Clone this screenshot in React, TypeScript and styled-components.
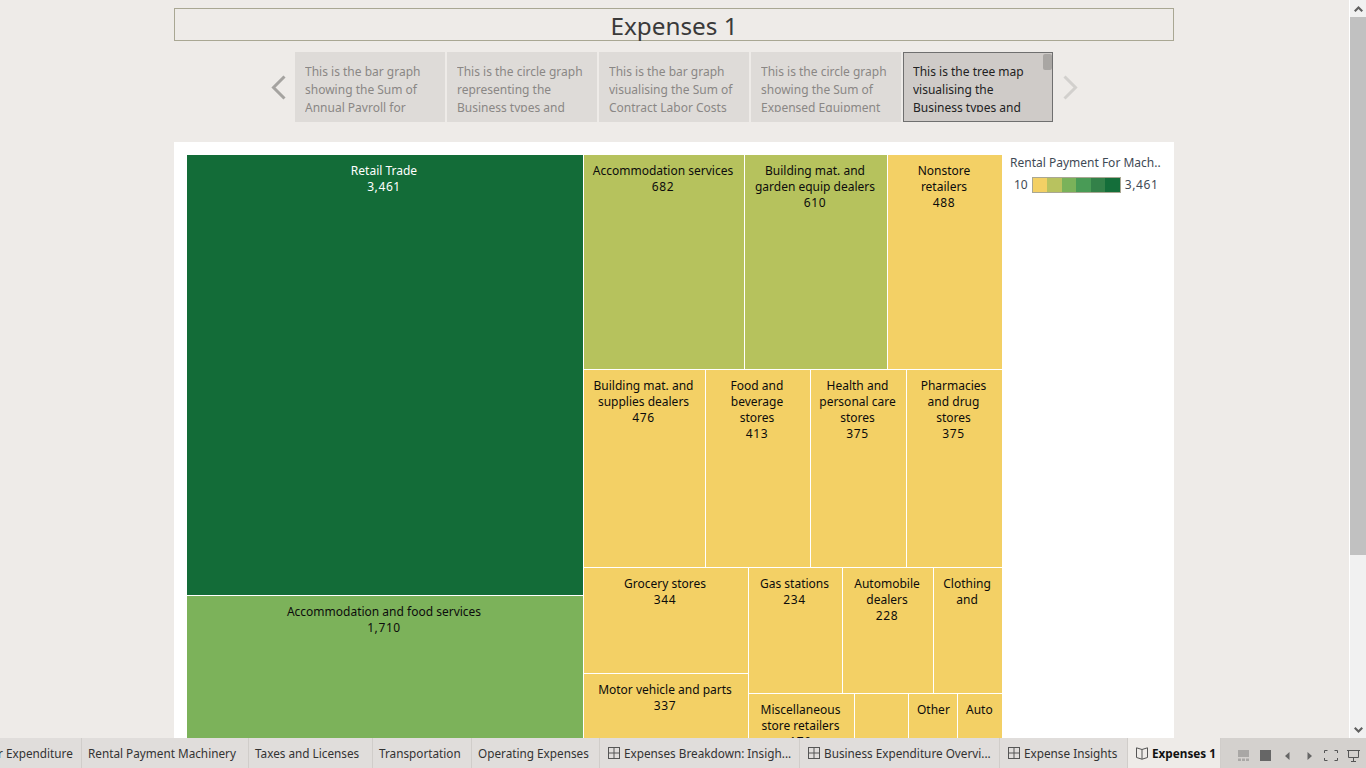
import React from "react";
import styled, { createGlobalStyle } from "styled-components";

const FONT = `"Noto Sans", "Open Sans", sans-serif`;

const GlobalStyle = createGlobalStyle`
  html, body {
    margin: 0;
    padding: 0;
    height: 100%;
    overflow: hidden;
    background: #eeebe8;
    font-family: ${FONT};
  }
`;

const Page = styled.div`
  display: flex;
  flex-direction: column;
  width: 1366px;
  height: 768px;
`;

const Main = styled.div`
  display: flex;
  height: 738px;
`;

const Dashboard = styled.div`
  width: 1349px;
  height: 738px;
  overflow: hidden;
  box-sizing: border-box;
  padding: 8px 175px 0 174px;
`;

const Title = styled.div`
  height: 33px;
  box-sizing: border-box;
  border: 1px solid #a9a793;
  padding-top: 1px;
  display: flex;
  align-items: center;
  justify-content: center;
  font-size: 24.3px;
  color: #3a3a3a;
`;

const Carousel = styled.div`
  display: flex;
  align-items: center;
  justify-content: center;
  gap: 2px;
  margin-top: 11px;
  height: 70px;
`;

const Arrow = styled.div<{ $faded?: boolean }>`
  width: 30px;
  display: flex;
  align-items: center;
  justify-content: center;
  color: ${({ $faded }) => ($faded ? "#d2d0cd" : "#a5a3a0")};
`;

const Story = styled.div<{ $active?: boolean }>`
  position: relative;
  width: 150px;
  height: 70px;
  box-sizing: border-box;
  padding: ${({ $active }) => ($active ? "10px 8px 9px 9px" : "11px 9px 10px 10px")};
  background: ${({ $active }) => ($active ? "#cfcbc8" : "#dedbd8")};
  border: ${({ $active }) => ($active ? "1px solid #6f6f6f" : "none")};
  color: ${({ $active }) => ($active ? "#222" : "#8a8785")};
  font-size: 12px;
  line-height: 18px;
`;

const StoryText = styled.div`
  height: 49px;
  overflow: hidden;
`;

const StoryThumb = styled.div`
  position: absolute;
  top: 1px;
  right: 0;
  width: 9px;
  height: 16px;
  border-radius: 2px;
  background: #a9a6a3;
`;

const Card = styled.div`
  display: flex;
  margin-top: 20px;
  height: 596px;
  box-sizing: border-box;
  padding: 13px 0 0 13px;
  background: #fff;
  overflow: hidden;
`;

const TreeMap = styled.div`
  display: flex;
  flex: none;
  width: 815px;
  height: 640px;
  gap: 1px;
`;

const Stack = styled.div<{ $w?: number; $h?: number }>`
  display: flex;
  flex-direction: column;
  flex: none;
  gap: 1px;
  width: ${({ $w }) => ($w ? `${$w}px` : "auto")};
  height: ${({ $h }) => ($h ? `${$h}px` : "auto")};
`;

const Row = styled.div<{ $h?: number }>`
  display: flex;
  flex: none;
  gap: 1px;
  height: ${({ $h }) => ($h ? `${$h}px` : "auto")};
`;

const Cell = styled.div<{ $w?: number; $h?: number; $bg: string; $light?: boolean }>`
  flex: none;
  box-sizing: border-box;
  width: ${({ $w }) => ($w ? `${$w}px` : "100%")};
  height: ${({ $h }) => ($h ? `${$h}px` : "100%")};
  padding: 8px 10px 0 8px;
  background: ${({ $bg }) => $bg};
  color: ${({ $light }) => ($light ? "#fff" : "#0c0c0c")};
  font-size: 12px;
  line-height: 16px;
  text-align: center;
  overflow: hidden;
`;

const Value = styled.div`
  letter-spacing: 0.6px;
`;

const Legend = styled.div`
  margin-left: 8px;
  color: #3f4a55;
  font-size: 12px;
`;

const LegendTitle = styled.div`
  height: 16px;
  line-height: 16px;
  white-space: nowrap;
`;

const LegendScale = styled.div`
  display: flex;
  align-items: center;
  margin: 6px 0 0 4px;
  gap: 4px;
  line-height: 16px;
`;

const Ramp = styled.div`
  display: flex;
  width: 89px;
  height: 16px;
  box-sizing: border-box;
  border: 1px solid #a9a793;
`;

const Swatch = styled.div<{ $c: string }>`
  flex: 1;
  background: ${({ $c }) => $c};
`;

const Scrollbar = styled.div`
  width: 17px;
  height: 738px;
  display: flex;
  flex-direction: column;
  background: #f1f1f1;
  border-left: 1px solid #fff;
  box-sizing: border-box;
`;

const ScrollButton = styled.div`
  height: 17px;
  display: flex;
  align-items: center;
  justify-content: center;
  flex: none;
`;

const ScrollThumb = styled.div`
  height: 538px;
  background: #c1c1c1;
  flex: none;
`;

const ScrollTrack = styled.div`
  flex: 1;
`;

const TabBar = styled.div`
  display: flex;
  height: 30px;
  background: #d4d1ce;
`;

const TabStrip = styled.div`
  display: flex;
  justify-content: flex-end;
  width: 1221px;
  overflow: hidden;
`;

const Tab = styled.div<{ $w: number; $active?: boolean; $icon?: boolean }>`
  flex: none;
  display: flex;
  align-items: center;
  gap: 4px;
  width: ${({ $w }) => `${$w}px`};
  box-sizing: border-box;
  padding-left: ${({ $icon }) => ($icon ? "8px" : "6px")};
  background: ${({ $active }) => ($active ? "#eeebe8" : "#e0dddb")};
  border-right: 1px solid #d0cdca;
  color: ${({ $active }) => ($active ? "#111" : "#333")};
  font-size: 11.75px;
  font-weight: ${({ $active }) => ($active ? 700 : 400)};
  white-space: nowrap;
`;

const Controls = styled.div`
  display: grid;
  grid-template-columns: repeat(6, 22px);
  align-items: center;
  justify-items: center;
  padding: 5px 0 0 11px;
`;

const YELLOW = "#f3d065";
const OLIVE = "#b6c25d";
const GREEN = "#7cb25a";
const DARK = "#136c38";

const stories = [
  "This is the bar graph showing the Sum of Annual Payroll for",
  "This is the circle graph representing the Business types and",
  "This is the bar graph visualising the Sum of Contract Labor Costs",
  "This is the circle graph showing the Sum of Expensed Equipment",
  "This is the tree map visualising the Business types and",
];

const Label = ({ name, value }: { name: string; value?: string }) => (
  <>
    {name}
    {value && <Value>{value}</Value>}
  </>
);

const SheetIcon = () => (
  <svg width="12" height="12" viewBox="0 0 12 12" fill="none" stroke="#555" strokeWidth="1">
    <rect x="0.5" y="0.5" width="11" height="11" />
    <path d="M6 .5v11M.5 6h11" />
  </svg>
);

const BookIcon = () => (
  <svg width="12" height="13" viewBox="0 0 12 13" fill="none" stroke="#555" strokeWidth="1">
    <path d="M6 2.500 .5 .8v9.700L6 12.200l5.500-1.700V.8zM6 2.500v9.700" />
  </svg>
);

const ChevronPrev = () => (
  <svg width="15" height="25" viewBox="0 0 15 25" fill="none" stroke="currentColor" strokeWidth="3">
    <path d="M13.500 1.500 2.500 12.500l11 11" />
  </svg>
);

const ChevronNext = () => (
  <svg width="15" height="25" viewBox="0 0 15 25" fill="none" stroke="currentColor" strokeWidth="3">
    <path d="M1.500 1.500l11 11-11 11" />
  </svg>
);

export default function App() {
  return (
    <Page>
      <GlobalStyle />
      <Main>
        <Dashboard>
          <Title>Expenses 1</Title>
          <Carousel>
            <Arrow>
              <ChevronPrev />
            </Arrow>
            {stories.map((text, i) => (
              <Story key={text} $active={i === 4}>
                <StoryText>{text}</StoryText>
                {i === 4 && <StoryThumb />}
              </Story>
            ))}
            <Arrow $faded>
              <ChevronNext />
            </Arrow>
          </Carousel>
          <Card>
            <TreeMap>
              <Stack $w={396}>
                <Cell $h={440} $bg={DARK} $light>
                  <Label name="Retail Trade" value="3,461" />
                </Cell>
                <Cell $h={199} $bg={GREEN}>
                  <Label name="Accommodation and food services" value="1,710" />
                </Cell>
              </Stack>
              <Stack $w={418}>
                <Row $h={214}>
                  <Cell $w={160} $bg={OLIVE}>
                    <Label name="Accommodation services" value="682" />
                  </Cell>
                  <Cell $w={142} $bg={OLIVE}>
                    <Label name="Building mat. and garden equip dealers" value="610" />
                  </Cell>
                  <Cell $w={114} $bg={YELLOW}>
                    <Label name="Nonstore retailers" value="488" />
                  </Cell>
                </Row>
                <Row $h={197}>
                  <Cell $w={121} $bg={YELLOW}>
                    <Label name="Building mat. and supplies dealers" value="476" />
                  </Cell>
                  <Cell $w={104} $bg={YELLOW}>
                    <Label name="Food and beverage stores" value="413" />
                  </Cell>
                  <Cell $w={95} $bg={YELLOW}>
                    <Label name="Health and personal care stores" value="375" />
                  </Cell>
                  <Cell $w={95} $bg={YELLOW}>
                    <Label name="Pharmacies and drug stores" value="375" />
                  </Cell>
                </Row>
                <Row $h={226}>
                  <Stack $w={164}>
                    <Cell $h={105} $bg={YELLOW}>
                      <Label name="Grocery stores" value="344" />
                    </Cell>
                    <Cell $h={120} $bg={YELLOW}>
                      <Label name="Motor vehicle and parts" value="337" />
                    </Cell>
                  </Stack>
                  <Stack $w={253}>
                    <Row $h={125}>
                      <Cell $w={93} $bg={YELLOW}>
                        <Label name="Gas stations" value="234" />
                      </Cell>
                      <Cell $w={90} $bg={YELLOW}>
                        <Label name="Automobile dealers" value="228" />
                      </Cell>
                      <Cell $w={68} $bg={YELLOW}>
                        <Label name="Clothing and" />
                      </Cell>
                    </Row>
                    <Row $h={100}>
                      <Cell $w={105} $bg={YELLOW}>
                        <Label name="Miscellaneous store retailers" value="179" />
                      </Cell>
                      <Cell $w={53} $bg={YELLOW} />
                      <Cell $w={48} $bg={YELLOW}>
                        <Label name="Other" />
                      </Cell>
                      <Cell $w={44} $bg={YELLOW}>
                        <Label name="Auto" />
                      </Cell>
                    </Row>
                  </Stack>
                </Row>
              </Stack>
            </TreeMap>
            <Legend>
              <LegendTitle>Rental Payment For Mach..</LegendTitle>
              <LegendScale>
                10
                <Ramp>
                  {["#f3d065", "#b8c25f", "#7ab25a", "#499b56", "#338149", "#146e3a"].map((c) => (
                    <Swatch key={c} $c={c} />
                  ))}
                </Ramp>
                <Value>3,461</Value>
              </LegendScale>
            </Legend>
          </Card>
        </Dashboard>
        <Scrollbar>
          <ScrollButton>
            <svg width="9" height="6" viewBox="0 0 9 6" fill="#606060">
              <path d="M4.500 0 9 4.500 7.500 6 4.500 3 1.500 6 0 4.500z" />
            </svg>
          </ScrollButton>
          <ScrollThumb />
          <ScrollTrack />
          <ScrollButton>
            <svg width="9" height="6" viewBox="0 0 9 6" fill="#606060">
              <path d="M4.500 6 0 1.500 1.500 0l3 3 3-3L9 1.500z" />
            </svg>
          </ScrollButton>
        </Scrollbar>
      </Main>
      <TabBar>
        <TabStrip>
          <Tab $w={117}>Labor Expenditure</Tab>
          <Tab $w={167}>Rental Payment Machinery</Tab>
          <Tab $w={124}>Taxes and Licenses</Tab>
          <Tab $w={99}>Transportation</Tab>
          <Tab $w={128}>Operating Expenses</Tab>
          <Tab $w={200} $icon>
            <SheetIcon />
            Expenses Breakdown: Insigh...
          </Tab>
          <Tab $w={200} $icon>
            <SheetIcon />
            Business Expenditure Overvi...
          </Tab>
          <Tab $w={128} $icon>
            <SheetIcon />
            Expense Insights
          </Tab>
          <Tab $w={93} $active $icon>
            <BookIcon />
            Expenses 1
          </Tab>
        </TabStrip>
        <Controls>
          <svg width="11" height="11" viewBox="0 0 11 11" fill="#a9a7a5">
            <rect width="11" height="7" />
            <rect y="8.500" width="3" height="2.500" />
            <rect x="4" y="8.500" width="3" height="2.500" />
            <rect x="8" y="8.500" width="3" height="2.500" />
          </svg>
          <svg width="11" height="11" viewBox="0 0 11 11" fill="#666">
            <rect width="11" height="11" />
          </svg>
          <svg width="5" height="8" viewBox="0 0 5 8" fill="#666">
            <path d="M4.500 0v8L0 4z" />
          </svg>
          <svg width="5" height="8" viewBox="0 0 5 8" fill="#666">
            <path d="M.5 0v8L5 4z" />
          </svg>
          <svg width="14" height="11" viewBox="0 0 14 11" fill="none" stroke="#555">
            <path d="M.5 3V.5h3M10.500.5h3V3M13.500 8v2.500h-3M3.500 10.500h-3V8" />
          </svg>
          <svg width="13" height="13" viewBox="0 0 13 13" fill="none" stroke="#555">
            <path d="M0 1.500h13M1.500 1.500v7h10v-7M6.500 8.500v4M4 12.500h5" />
          </svg>
        </Controls>
      </TabBar>
    </Page>
  );
}
